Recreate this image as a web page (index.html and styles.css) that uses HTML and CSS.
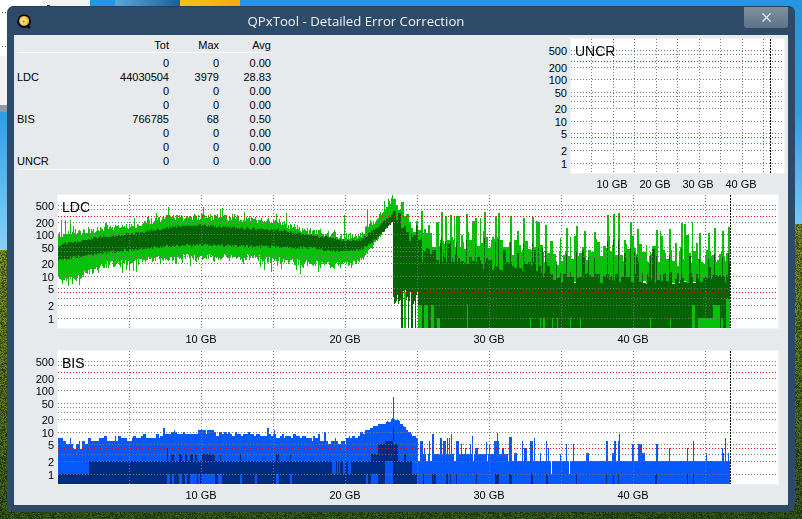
FILE: index.html
```html
<!DOCTYPE html>
<html lang="en">
<head>
  <meta charset="UTF-8" />
  <title>QPxTool - Detailed Error Correction</title>
  <link rel="stylesheet" href="styles.css">
</head>
<body>

  <!-- wallpaper and whatever is behind the window -->
  <canvas id="wallpaper" width="802" height="519"></canvas>

  <div class="window">
    <div class="titlebar">
      <svg class="app-icon" viewBox="0 0 16 16" xmlns="http://www.w3.org/2000/svg">
        <defs>
          <radialGradient id="disc" cx="0.45" cy="0.5" r="0.6">
            <stop offset="0" stop-color="#fff6d8"/>
            <stop offset="0.5" stop-color="#f8d060"/>
            <stop offset="1" stop-color="#e89a20"/>
          </radialGradient>
        </defs>
        <path d="M10 13l3 2.6 1.6-1.2-2.6-2.6z" fill="#000"/>
        <circle cx="7.6" cy="7.6" r="7.2" fill="#000"/>
        <circle cx="7.6" cy="7.4" r="5.4" fill="url(#disc)"/>
        <circle cx="7.2" cy="8" r="1" fill="#8a5a20"/>
      </svg>
      <div class="title">QPxTool - Detailed Error Correction</div>
      <div class="close-button">
        <svg viewBox="0 0 10 10" xmlns="http://www.w3.org/2000/svg">
          <path d="M0.5 0.5L9.5 9.5M9.5 0.5L0.5 9.5" stroke="#fff" stroke-width="1.3" fill="none"/>
        </svg>
      </div>
    </div>

    <div class="client">
      <div class="top-row">
        <table class="stats">
          <thead>
            <tr><th></th><th>Tot</th><th>Max</th><th>Avg</th></tr>
          </thead>
          <tbody>
            <tr><td></td><td>0</td><td>0</td><td>0.00</td></tr>
            <tr><td>LDC</td><td>44030504</td><td>3979</td><td>28.83</td></tr>
            <tr><td></td><td>0</td><td>0</td><td>0.00</td></tr>
            <tr><td></td><td>0</td><td>0</td><td>0.00</td></tr>
            <tr><td>BIS</td><td>766785</td><td>68</td><td>0.50</td></tr>
            <tr><td></td><td>0</td><td>0</td><td>0.00</td></tr>
            <tr><td></td><td>0</td><td>0</td><td>0.00</td></tr>
            <tr><td>UNCR</td><td>0</td><td>0</td><td>0.00</td></tr>
          </tbody>
        </table>

        <div class="chart chart-uncr" id="uncr">
          <div class="y-axis"></div>
          <div class="plot">
            <canvas width="213" height="134"></canvas>
            <span class="plot-name">UNCR</span>
          </div>
          <div class="x-axis"></div>
        </div>
      </div>

      <div class="chart chart-ldc" id="ldc">
        <div class="y-axis"></div>
        <div class="plot">
          <canvas width="720" height="133"></canvas>
          <span class="plot-name">LDC</span>
        </div>
        <div class="x-axis"></div>
      </div>

      <div class="chart chart-bis" id="bis">
        <div class="y-axis"></div>
        <div class="plot">
          <canvas width="720" height="133"></canvas>
          <span class="plot-name">BIS</span>
        </div>
        <div class="x-axis"></div>
      </div>
    </div>
  </div>

  <script src="charts.js"></script>
</body>
</html>
```

FILE: styles.css
```css
html, body {
  margin: 0;
  padding: 0;
  height: 100%;
  overflow: hidden;
  font-family: "Liberation Sans", Arial, sans-serif;
  font-size: 11px;
  color: #000;
}

#wallpaper {
  position: absolute;
  top: 0;
  left: 0;
}

.window {
  position: absolute;
  left: 7px;
  top: 6px;
  width: 788px;
  height: 506px;
  display: flex;
  flex-direction: column;
  background: #2d4a68;
  border-radius: 7px;
  box-shadow: inset 0 1px 0 #24405c;
}

.titlebar {
  display: flex;
  align-items: flex-start;
  height: 29px;
  flex: none;
}

.app-icon {
  width: 15px;
  height: 15px;
  margin: 8px 0 0 10px;
  flex: none;
}

.title {
  flex: 1;
  padding: 7px 64px 0 0;
  text-align: center;
  font-family: "Open Sans", sans-serif;
  font-size: 13.2px;
  line-height: 16px;
  color: #f0f4f8;
}

.close-button {
  display: flex;
  align-items: center;
  justify-content: center;
  width: 44px;
  height: 21px;
  margin: 1px 7px 0 0;
  flex: none;
  background: linear-gradient(to bottom, #80909f 0%, #5c7388 100%);
  border-radius: 0 0 3px 3px;
}

.close-button svg {
  width: 9px;
  height: 9px;
}

.client {
  flex: 1;
  margin: 0 7px 7px;
  display: flex;
  flex-direction: column;
  background: #e6eaed;
}

.top-row {
  display: flex;
  justify-content: space-between;
  align-items: flex-start;
  padding: 4px 4px 0 3px;
}

.stats {
  width: 254px;
  margin-top: -1px;
  border-collapse: collapse;
}

.stats th, .stats td {
  height: 14px;
  padding: 0;
  font-weight: normal;
  line-height: 14px;
  text-align: right;
}

.stats th:first-child, .stats td:first-child {
  width: 40px;
  text-align: left;
}

.stats th:nth-child(2), .stats td:nth-child(2) {
  width: 112px;
}

.stats th:nth-child(3), .stats td:nth-child(3) {
  width: 50px;
}

.stats thead tr {
  border-bottom: 1px solid #f6f8f9;
}

.stats tbody tr:first-child td {
  padding-top: 3px;
}

.stats tbody tr:last-child {
  border-bottom: 1px solid #f6f8f9;
}

.stats tbody tr:last-child td {
  padding-bottom: 1px;
}

.chart {
  display: grid;
  grid-template-columns: 44px 720px;
  grid-template-rows: 133px 21px;
}

.chart-uncr {
  grid-template-columns: 40px 213px;
  grid-template-rows: 134px 21px;
}

.chart-ldc {
  margin-top: 1px;
}

.chart-bis {
  margin-top: 2px;
}

.y-axis, .x-axis {
  position: relative;
}

.x-axis {
  grid-column: 2;
}

.y-label {
  position: absolute;
  right: 4px;
  line-height: 14px;
}

.x-label {
  position: absolute;
  top: 0;
  line-height: 22px;
  white-space: nowrap;
  transform: translateX(-50%);
}

.plot {
  position: relative;
  background: #fff;
  box-shadow: 0 0 0 1px #f1f3f5;
}

.plot canvas {
  display: block;
}

.plot-name {
  position: absolute;
  left: 4px;
  top: 4px;
  font-size: 14px;
  line-height: 16px;
}
```

FILE: charts.js
```js
// small seeded random so the picture stays the same every load
let seed = 20411;
function rnd() {
  seed = (seed * 1664525 + 1013904223) % 4294967296;
  return seed / 4294967296;
}

function interp(points, x) {
  for (let i = 1; i < points.length; i++) {
    if (x <= points[i][0]) {
      const a = points[i - 1], b = points[i];
      return a[1] + (b[1] - a[1]) * (x - a[0]) / (b[0] - a[0]);
    }
  }
  return points[points.length - 1][1];
}

const TICKS = [10, 14, 27, 39, 52, 56, 61, 68, 81, 93, 103, 110, 123];
const RED_TICKS = [21, 97];
const LABELS = [[500, 10], [200, 27], [100, 39], [50, 52], [20, 68], [10, 81], [5, 93], [2, 110], [1, 123]];

function dottedH(ctx, y, x0, x1, color, on, off) {
  ctx.fillStyle = color;
  for (let x = x0; x < x1; x += on + off) ctx.fillRect(x, y, on, 1);
}

function dottedV(ctx, x, h, color, on, off) {
  ctx.fillStyle = color;
  for (let y = 0; y < h; y += on + off) ctx.fillRect(x, y, 1, on);
}

function drawGrid(ctx, cfg) {
  const w = ctx.canvas.width, h = ctx.canvas.height;
  TICKS.forEach(t => dottedH(ctx, t + cfg.shift, 0, w - 2, '#777', 1, 2));
  RED_TICKS.forEach(t => dottedH(ctx, t + cfg.shift, 0, w - 1, '#f0000c', 1, 2));
  for (let i = 1; i <= 9; i++) {
    dottedV(ctx, Math.round(cfg.first + cfg.step * (i - 1)), h, '#777', 1, 2);
  }
  dottedV(ctx, cfg.end, h, '#000', 2, 1);
}

function addLabels(id, cfg) {
  const chart = document.getElementById(id);
  const yAxis = chart.querySelector('.y-axis');
  const xAxis = chart.querySelector('.x-axis');
  LABELS.forEach(([text, t]) => {
    const el = document.createElement('div');
    el.className = 'y-label';
    el.textContent = text;
    el.style.top = (t + cfg.shift - 6) + 'px';
    yAxis.appendChild(el);
  });
  [10, 20, 30, 40].forEach((gb, i) => {
    const el = document.createElement('div');
    el.className = 'x-label';
    el.textContent = gb + ' GB';
    el.style.left = (cfg.label + cfg.step * 2 * i) + 'px';
    xAxis.appendChild(el);
  });
}

function getCtx(id) {
  return document.querySelector('#' + id + ' canvas').getContext('2d');
}

/* LDC ---------------------------------------------------------------- */
function drawLdc(ctx) {
  const TOP = 195, X0 = 58;
  const G_LIGHT = '#08c008', G_DARK = '#046404';
  const col = (c, x, y0, y1, w) => {
    ctx.fillStyle = c;
    ctx.fillRect(x - X0, y0 - TOP, w || 1, y1 - y0);
  };

  const lightTop = [[58, 235], [100, 230], [130, 227], [170, 218], [200, 217], [240, 219], [280, 223], [310, 232], [340, 237], [360, 235], [375, 220], [385, 208], [393, 198]];
  const lightBot = [[58, 277], [75, 278], [100, 265], [130, 262], [170, 257], [200, 257], [240, 256], [280, 260], [310, 263], [340, 265], [360, 260], [375, 242], [385, 228], [393, 218]];
  const darkTop = [[58, 245], [100, 237], [130, 234], [170, 227], [200, 225], [240, 228], [280, 230], [310, 235], [340, 240], [360, 240], [375, 228], [393, 213]];
  const darkBot = [[58, 260], [100, 253], [130, 250], [170, 246], [200, 245], [240, 246], [280, 247], [310, 248], [340, 252], [360, 250], [375, 240], [393, 220]];
  const upSpikes = { 61: 220, 65: 220, 70: 220, 134: 218, 147: 217, 168: 207, 234: 214, 276: 214, 286: 213, 344: 215, 367: 209, 392: 195 };
  const downSpikes = { 62: 284, 68: 286, 72: 284, 136: 272, 160: 264, 318: 272, 340: 268 };

  for (let x = X0; x < 393; x++) {
    let t = interp(lightTop, x) + rnd() * 7 - 4;
    let b = interp(lightBot, x) + rnd() * 7 - 3;
    if (rnd() < 0.1) t -= rnd() * 9;
    if (rnd() < 0.14) b += rnd() * 9;
    if (upSpikes[x]) t = upSpikes[x];
    if (downSpikes[x]) b = downSpikes[x];
    col(G_LIGHT, x, Math.round(t), Math.round(b));
    const dt = interp(darkTop, x) + rnd() * 3 - 1.5;
    const db = interp(darkBot, x) + rnd() * 3 - 1.5;
    col(G_DARK, x, Math.round(dt), Math.round(db));
  }

  // after the layer break: solid dark block with tall light spikes
  const lightRight = [[393, 197], [397, 201], [405, 214], [412, 225], [418, 232], [430, 240], [470, 240], [500, 244], [530, 250], [545, 256], [560, 258], [600, 254], [650, 254], [700, 260], [730, 256]];
  const darkRight = [[393, 214], [400, 226], [418, 245], [440, 258], [520, 268], [560, 277], [730, 279]];
  const bigSpikes = [[421, 211], [441, 212], [445, 216], [450, 215], [456, 216], [466, 214], [475, 218], [484, 212], [495, 216], [498, 213], [510, 216], [523, 218], [532, 217], [538, 222], [545, 225], [566, 228], [576, 226], [584, 231], [594, 232], [607, 215], [613, 214], [618, 213], [630, 222], [637, 229], [656, 230], [669, 229], [681, 223], [699, 233], [708, 233], [714, 228], [722, 231], [728, 227]];
  const fullCols = [[401, 403], [408, 409], [411, 413], [415, 416]];

  let x = 393;
  while (x < 730) {
    const w = Math.min(1 + Math.floor(rnd() * 3), 730 - x);
    let t = interp(lightRight, x) + rnd() * 18 - 9;
    if (x > 418 && rnd() < 0.3) t -= 6 + rnd() * 24;
    if (x > 418 && t < 213) t = 213 + rnd() * 8;
    col(G_LIGHT, x, Math.round(t), 281 + Math.round(rnd() * 9), w);

    let d = interp(darkRight, x) + rnd() * 12 - 6;
    if (rnd() < 0.22) d -= rnd() * 36;
    if (d < t + 3) d = t + 3;
    col(G_DARK, x, Math.round(d), 328, w);
    x += w;
  }
  bigSpikes.forEach(([sx, t]) => {
    col(G_LIGHT, sx, t, 262, 2);
    col(G_DARK, sx, t + 26, 285, 1);
  });

  // the first stretch after the break stops short of the axis
  for (let gx = 393; gx < 418; gx++) {
    if (fullCols.some(([a, b]) => gx >= a && gx < b)) continue;
    const bottom = 290 + Math.round(rnd() * 14);
    ctx.clearRect(gx - X0, bottom - TOP, 1, 328 - bottom);
  }

  // light patches reaching the axis
  const patches = [[404, 406, 292], [418, 422, 305], [424, 428, 305], [431, 434, 305], [437, 440, 318], [467, 468, 305], [530, 531, 318], [540, 541, 318], [543, 545, 318], [552, 553, 318], [557, 558, 318], [570, 571, 318], [580, 581, 318], [650, 651, 318], [670, 671, 318], [692, 695, 305], [698, 713, 318], [713, 720, 305], [721, 723, 318], [726, 730, 299]];
  patches.forEach(([a, b, t]) => col(G_LIGHT, a, t, 328, b - a));
}

/* BIS ---------------------------------------------------------------- */
function drawBis(ctx) {
  const TOP = 351, X0 = 58;
  const BLUE = '#0658fa', NAVY = '#002b82';
  const rect = (c, x0, x1, y0, y1) => {
    ctx.fillStyle = c;
    ctx.fillRect(x0 - X0, y0 - TOP, x1 - x0, y1 - y0);
  };
  const level = v => Math.round(474 - 42.3 * Math.log10(v));

  const envelope = [[58, 6], [75, 5], [88, 5.2], [92, 6.6], [130, 7], [165, 8.2], [200, 10], [240, 8.6], [280, 8], [310, 7], [320, 5.8], [345, 5.8], [360, 8.6], [375, 13], [385, 16], [392, 21], [397, 18], [403, 13], [410, 9], [416, 7]];
  let bx = 58;
  while (bx < 418) {
    const w = 1 + Math.floor(rnd() * 3);
    let v = interp(envelope, bx);
    v = Math.max(2, Math.round(v + rnd() * 2.4 - 1));
    if (bx > 160 && bx < 345 && rnd() < 0.1) v += 2 + Math.round(rnd());
    rect(BLUE, bx, Math.min(bx + w, 418), level(v), 484);
    bx += w;
  }
  rect(BLUE, 393, 394, 397, 484);

  // flat part at level 2 with short columns on top
  rect(BLUE, 418, 730, 461, 484);
  for (let x = 418; x < 507; x += 2) {
    if (rnd() < 0.8) rect(BLUE, x, x + 2, 454, 461);
  }
  const spikes = [[120, 130, 288], [133, 135, 310], [147, 149, 288], [157, 163, 268], [180, 187, 278], [190, 197, 288], [202, 204, 278], [207, 209, 278], [213, 215, 268], [228, 236, 288], [242, 247, 298], [255, 257, 310], [270, 272, 298], [277, 279, 272], [285, 295, 308], [305, 307, 268], [318, 320, 290], [328, 330, 298], [343, 358, 288], [350, 353, 263], [365, 373, 308], [388, 395, 275], [403, 410, 325], [427, 430, 288], [432, 440, 308], [443, 445, 298], [450, 460, 288], [463, 465, 278], [480, 482, 325], [498, 501, 288], [505, 507, 308], [527, 529, 328], [540, 542, 328], [548, 550, 328], [558, 560, 298], [578, 583, 298], [590, 592, 298], [618, 628, 325], [626, 628, 308], [678, 684, 288], [697, 708, 325], [702, 707, 288], [715, 720, 288], [717, 720, 268], [725, 727, 325], [755, 762, 298], [775, 785, 298], [775, 795, 325], [827, 835, 298], [868, 870, 310], [890, 892, 310], [922, 924, 310], [940, 942, 288], [978, 980, 325], [1025, 1033, 325], [1025, 1028, 310], [1036, 1038, 280], [1045, 1047, 325]];
  spikes.forEach(([a, b, t]) => rect(BLUE, 380 + Math.round(a / 3), 380 + Math.round(b / 3), 345 + Math.round(t / 3), 461));
  rect('#fff', 551, 552, 461, 474);
  rect('#fff', 569, 570, 461, 474);

  // navy bands at the foot
  rect(NAVY, 89, 385, 461, 474);
  rect(NAVY, 393, 409, 461, 474);
  rect(NAVY, 409, 412, 461, 474);
  [[332, 336], [337, 338], [339, 340], [343, 345], [348, 351]].forEach(([a, b]) => rect(BLUE, a, b, 461, 474));

  rect(NAVY, 58, 417, 474, 484);
  const blueZoom = [[500, 503], [506, 510], [515, 522], [536, 546], [555, 557], [570, 572], [576, 578], [582, 590], [594, 600], [605, 645], [655, 665], [720, 727], [765, 768], [827, 837], [870, 873], [1098, 1100], [1112, 1133], [1155, 1180]];
  blueZoom.forEach(([a, b]) => rect(BLUE, Math.round(a / 3), Math.round(b / 3) + (b - a < 4 ? 1 : 0), 474, 484));
  rect(BLUE, 385, 393, 461, 474);

  const navyRight = [[130, 132], [155, 168], [185, 187], [197, 203], [210, 212], [228, 230], [248, 250], [278, 280], [288, 290], [305, 307], [345, 358], [388, 395], [425, 427], [453, 460], [497, 503], [588, 590], [678, 680], [700, 702], [715, 717], [825, 830], [922, 924], [940, 942]];
  navyRight.forEach(([a, b]) => rect(NAVY, 380 + Math.round(a / 3), 380 + Math.round(b / 3), 474, 484));

  const navyThird = [[500, 503], [513, 522], [536, 546], [555, 560], [570, 580], [585, 590], [605, 645], [650, 652], [660, 662], [720, 722], [770, 772], [828, 836], [870, 872], [1100, 1102]];
  navyThird.forEach(([a, b]) => rect(NAVY, Math.round(a / 3), Math.round(b / 3), 454, 461));
  rect(NAVY, 371, 398, 454, 461);
  rect(NAVY, 378, 398, 444, 454);
  rect(NAVY, 385, 393, 441, 444);
  rect(NAVY, 393, 394, 427, 441);
  rect(NAVY, 167, 168, 448, 454);
  rect(NAVY, 404, 406, 454, 461);
}

/* desktop behind the window ------------------------------------------- */
function drawWallpaper() {
  const ctx = document.getElementById('wallpaper').getContext('2d');
  const sky = ctx.createLinearGradient(0, 0, 0, 255);
  sky.addColorStop(0, '#2496e0');
  sky.addColorStop(0.45, '#2e9fe6');
  sky.addColorStop(1, '#8ad4fa');
  ctx.fillStyle = sky;
  ctx.fillRect(0, 0, 802, 519);

  // grass, per pixel
  const img = ctx.getImageData(0, 0, 802, 519);
  for (let y = 0; y < 519; y++) {
    for (let x = 0; x < 802; x++) {
      const horizon = 250 - 27 * x / 802;
      if (y < horizon) continue;
      const fade = (y - horizon) / 280;
      const n = 0.45 + rnd() * 0.8;
      const i = (y * 802 + x) * 4;
      img.data[i] = (112 - 62 * fade) * n;
      img.data[i + 1] = (135 - 50 * fade) * n;
      img.data[i + 2] = (30 - 6 * fade) * n;
    }
  }
  ctx.putImageData(img, 0, 0);

  // the other window and the orb peeking over the top edge
  ctx.fillStyle = '#fff';
  ctx.fillRect(0, 0, 42, 56);
  ctx.fillStyle = '#f2f2f2';
  ctx.fillRect(42, 0, 48, 6);
  ctx.fillRect(0, 56, 7, 49);
  ctx.fillStyle = '#8e9ba6';
  ctx.fillRect(0, 105, 7, 7);
  ctx.fillStyle = '#222';
  ctx.fillRect(47, 5, 3, 1);
  dottedH(ctx, 12, 2, 7, '#555', 1, 2);
  dottedH(ctx, 46, 2, 7, '#555', 1, 2);

  const orb = ctx.createLinearGradient(115, 0, 180, 0);
  orb.addColorStop(0, '#5aa8d8');
  orb.addColorStop(0.6, '#3a7cb4');
  orb.addColorStop(1, '#1c5c9c');
  ctx.fillStyle = orb;
  ctx.fillRect(115, 0, 65, 6);
  const sun = ctx.createLinearGradient(180, 0, 240, 0);
  sun.addColorStop(0, '#f4c018');
  sun.addColorStop(1, '#f8a818');
  ctx.fillStyle = sun;
  ctx.fillRect(180, 0, 60, 6);
}

const wide = { first: 71.3, step: 72, end: 672, label: 143, shift: 0 };
const small = { first: 20.3, step: 21.5, end: 199, label: 41, shift: 1 };

drawWallpaper();

const ldc = getCtx('ldc');
drawLdc(ldc);
drawGrid(ldc, wide);
addLabels('ldc', wide);

const bis = getCtx('bis');
drawBis(bis);
drawGrid(bis, wide);
addLabels('bis', wide);

drawGrid(getCtx('uncr'), small);
addLabels('uncr', small);
```
